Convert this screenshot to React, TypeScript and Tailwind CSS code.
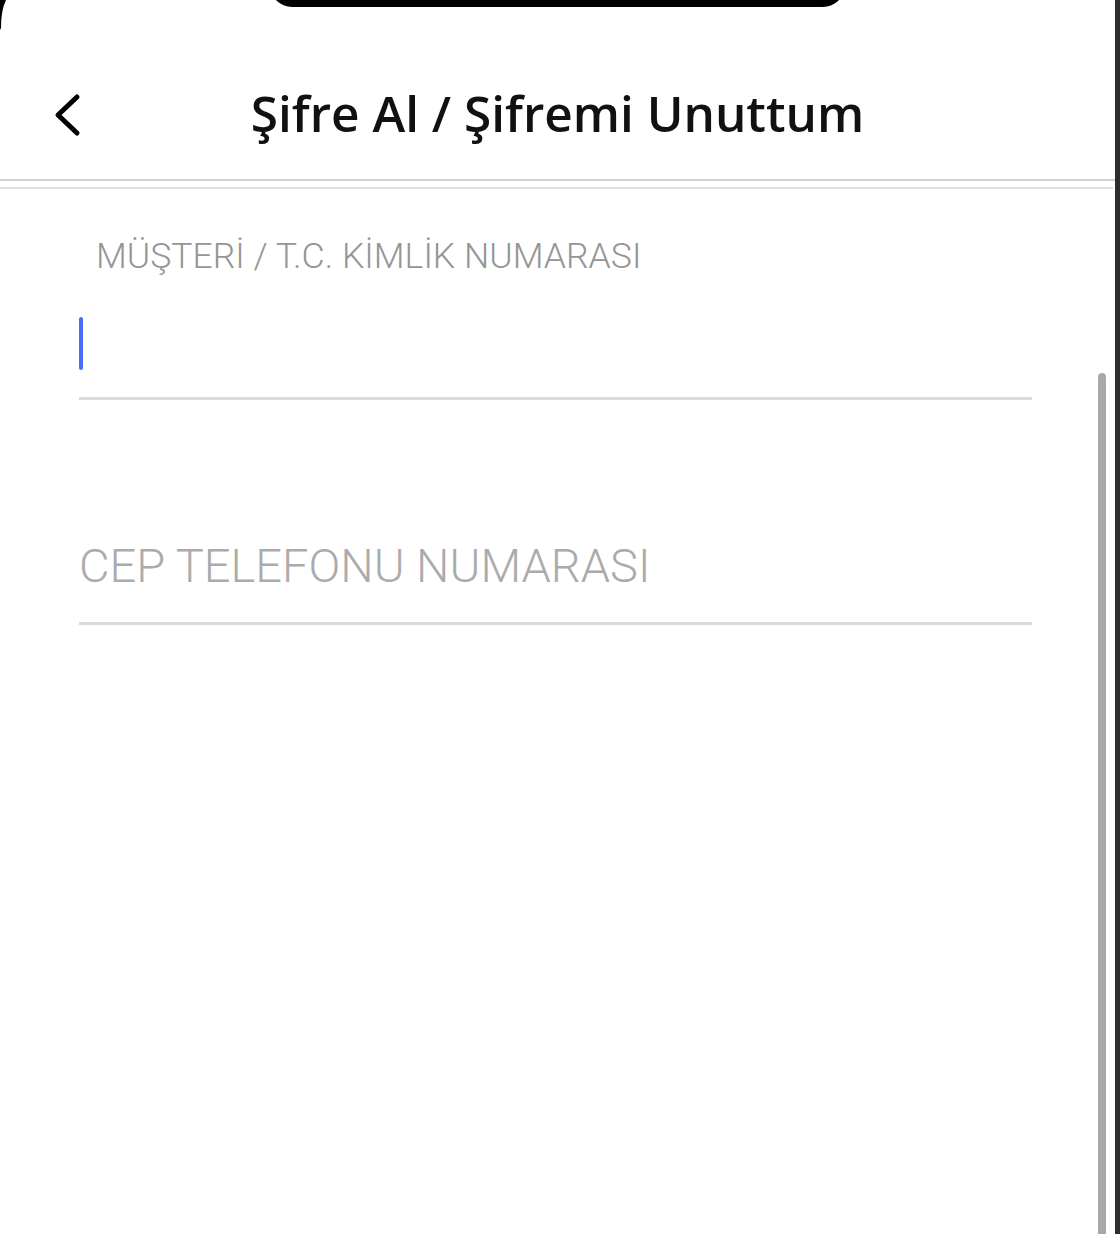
import React from 'react';

export default function App() {
  return (
    <div className="relative flex h-[1234px] w-[1120px] overflow-hidden bg-white">
      {/* screen */}
      <div className="relative flex flex-1 flex-col">
        <div className="h-[64px]" />
        {/* header */}
        <div className="relative flex h-[100px] items-center justify-center">
          <button className="absolute left-[50px] top-[28px] text-black">
            <svg width="34" height="46" viewBox="0 0 34 46" fill="none">
              <path d="M27 5 L8 23 L27 41" stroke="black" strokeWidth="5" strokeLinecap="round" strokeLinejoin="round" />
            </svg>
          </button>
          <h1 className="pb-[2px] font-['Open_Sans',sans-serif] text-[49.5px] font-semibold tracking-[0px] text-[#111]">
            Şifre Al / Şifremi Unuttum
          </h1>
        </div>
        <div className="mt-[15px] h-[2px] bg-[#cfcfcf]" />
        <div className="mr-[2px] mt-[6px] h-[2px] bg-[#dedede]" />

        {/* form */}
        <div className="flex flex-col pl-[79px] pr-[83px]">
          <label className="mt-[47px] pl-[17px] font-['Roboto',sans-serif] text-[35.6px] font-light leading-[40px] text-[#959595]">
            MÜŞTERİ / T.C. KİMLİK NUMARASI
          </label>
          <div className="mt-[34px] flex h-[90px] items-start border-b-[3px] border-[#dadada]">
            <span className="mt-[7px] h-[53px] w-[4px] rounded-full bg-[#4a6cf7]" />
          </div>

          <div className="mt-[138px] flex h-[87px] items-start border-b-[3px] border-[#dadada]">
            <span className="font-['Roboto',sans-serif] text-[47px] font-light leading-[56px] text-[#ababab]">
              CEP TELEFONU NUMARASI
            </span>
          </div>
        </div>

        {/* scrollbar */}
        <div className="absolute right-[9px] top-[373px] h-[870px] w-[8px] rounded-t-full bg-[#a9a9a9]" />
      </div>

      {/* device frame */}
      <div className="w-[5px] bg-[#2c2c31]" />
      <div className="absolute left-[270px] top-[-20px] h-[27px] w-[575px] rounded-b-[22px] bg-black" />
      <svg className="absolute left-0 top-0" width="10" height="30" viewBox="0 0 10 30">
        <path d="M0 0 H6 Q1 10 1 28 L0 30 Z" fill="black" />
      </svg>
    </div>
  );
}
